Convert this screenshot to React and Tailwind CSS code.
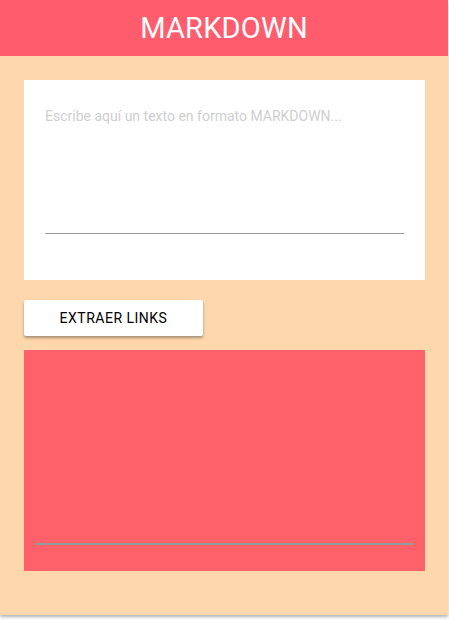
import React from "react";

const App = () => {
    return (
        <div className="w-[449px] min-h-[630px] bg-white font-['Roboto',sans-serif]">
            <div className="w-[448px] bg-[#fed8ac] shadow-[0_2px_3px_rgba(0,0,0,0.3)] pb-[44px]">
                {/* Header */}
                <div className="h-[56px] bg-[#ff5d6e] flex items-center justify-center">
                    <h1 className="text-[29px] text-white font-normal leading-none tracking-[0.2px]">MARKDOWN</h1>
                </div>

                <div className="px-[24px] pt-[24px]">
                    {/* Input card */}
                    <div className="w-[401px] h-[200px] bg-white px-[21px] pt-[27px]">
                        <textarea
                            className="w-full h-[127px] resize-none outline-none border-b border-[#999] text-[14px] text-black placeholder:text-[#cfcfcf] leading-[18px]"
                            placeholder="Escribe aquí un texto en formato MARKDOWN..."
                        />
                    </div>

                    {/* Button */}
                    <button className="mt-[20px] w-[179px] h-[36px] bg-white rounded-[2px] shadow-[0_2px_3px_rgba(0,0,0,0.35)] text-[14px] text-black tracking-[0.5px] flex items-center justify-center">
                        EXTRAER LINKS
                    </button>

                    {/* Result */}
                    <div className="mt-[14px] w-[401px] h-[221px] bg-[#ff616a] px-[11px] pt-[193px]">
                        <div className="h-[2px] bg-[#999]"></div>
                    </div>
                </div>
            </div>
        </div>
    );
};

export default App;
